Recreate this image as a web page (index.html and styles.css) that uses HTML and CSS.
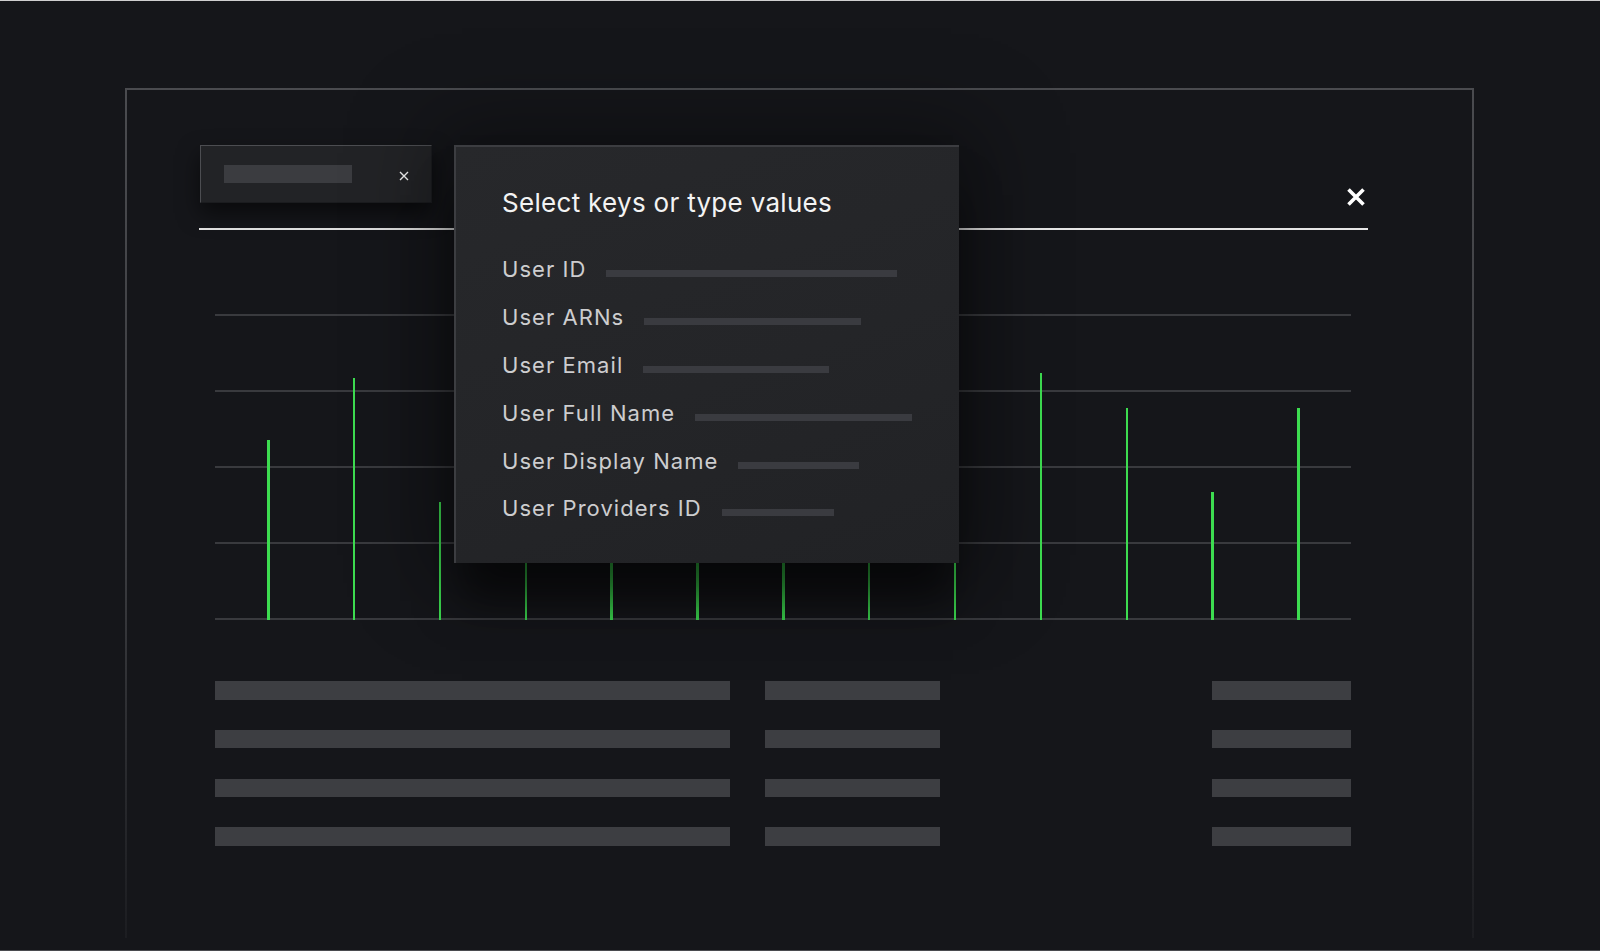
FILE: index.html
```html
<!DOCTYPE html>
<html lang="en">
<head>
<meta charset="utf-8">
<title>Select keys</title>
<link rel="stylesheet" href="styles.css">
</head>
<body>
<div class="frame">
  <div class="filterbar">
    <div class="chip">
      <div class="chip-fill"></div>
      <svg class="chip-x" width="10" height="10" viewBox="0 0 10 10"><path d="M1 1 L9 9 M9 1 L1 9" stroke="#f2f2f2" stroke-width="1.4" fill="none"/></svg>
    </div>
    <svg class="close-x" width="20" height="20" viewBox="0 0 20 20"><path d="M2.5 2.5 L17.5 17.5 M17.5 2.5 L2.5 17.5" stroke="#ffffff" stroke-width="3.6" fill="none"/></svg>
  </div>

  <div class="popup">
    <div class="popup-title">Select keys or type values</div>
    <ul class="keys">
      <li class="key"><span class="key-name">User ID</span><span class="key-bar" style="width:291px"></span></li>
      <li class="key"><span class="key-name">User ARNs</span><span class="key-bar" style="width:217px"></span></li>
      <li class="key"><span class="key-name">User Email</span><span class="key-bar" style="width:186px"></span></li>
      <li class="key"><span class="key-name">User Full Name</span><span class="key-bar" style="width:217px"></span></li>
      <li class="key"><span class="key-name">User Display Name</span><span class="key-bar" style="width:121px"></span></li>
      <li class="key"><span class="key-name">User Providers ID</span><span class="key-bar" style="width:112px"></span></li>
    </ul>
  </div>

  <div class="chart">
    <div class="bars">
      <div class="bar-col"><div class="bar" style="height:180px"></div></div>
      <div class="bar-col"><div class="bar" style="height:242px"></div></div>
      <div class="bar-col"><div class="bar" style="height:118px"></div></div>
      <div class="bar-col"><div class="bar" style="height:200px"></div></div>
      <div class="bar-col"><div class="bar" style="height:150px"></div></div>
      <div class="bar-col"><div class="bar" style="height:225px"></div></div>
      <div class="bar-col"><div class="bar" style="height:170px"></div></div>
      <div class="bar-col"><div class="bar" style="height:240px"></div></div>
      <div class="bar-col"><div class="bar" style="height:135px"></div></div>
      <div class="bar-col"><div class="bar" style="height:247px"></div></div>
      <div class="bar-col"><div class="bar" style="height:212px"></div></div>
      <div class="bar-col"><div class="bar" style="height:128px"></div></div>
      <div class="bar-col"><div class="bar" style="height:212px"></div></div>
    </div>
  </div>

  <div class="table">
    <div class="cell"></div><div class="cell"></div><div class="cell empty"></div><div class="cell"></div>
    <div class="cell"></div><div class="cell"></div><div class="cell empty"></div><div class="cell"></div>
    <div class="cell"></div><div class="cell"></div><div class="cell empty"></div><div class="cell"></div>
    <div class="cell"></div><div class="cell"></div><div class="cell empty"></div><div class="cell"></div>
  </div>
</div>
</body>
</html>
```

FILE: styles.css
```css
* { box-sizing: border-box; }

html, body {
  margin: 0;
  padding: 0;
}

body {
  width: 1600px;
  height: 951px;
  overflow: hidden;
  background: #15161a;
  border-top: 1px solid #cfcfd0;
  border-bottom: 1px solid #4a4b4f;
  font-family: Inter, "Liberation Sans", sans-serif;
}

.frame {
  position: relative;
  margin: 87px 0 0 125px;
  width: 1349px;
  height: 850px;
  padding: 55px 0 0 72px;
  border: 2px solid #46474b;
  border-bottom: none;
  border-image: linear-gradient(to bottom, #4a4b4f 0%, #3a3b3f 55%, #1c1d21 100%) 1;
}

.filterbar {
  width: 1169px;
  height: 85px;
  display: flex;
  justify-content: space-between;
  align-items: flex-start;
  border-bottom: 2px solid #e6e6e6;
}

.chip {
  width: 232px;
  height: 58px;
  margin-left: 1px;
  display: flex;
  align-items: center;
  justify-content: space-between;
  padding: 0 22px 0 23px;
  background: #222326;
  border-top: 1px solid #4c4d51;
  border-left: 1px solid #4c4d51;
  border-right: 1px solid #1b1c1f;
  border-bottom: 1px solid #1b1c1f;
  box-shadow: 0 10px 22px rgba(0, 0, 0, 0.55);
}

.chip-fill {
  width: 128px;
  height: 18px;
  background: #3b3c40;
}

.chip-x {
  display: block;
  margin-top: 3px;
}

.close-x {
  display: block;
  margin-top: 42px;
  margin-right: 2px;
}

.popup {
  position: absolute;
  left: 327px;
  top: 55px;
  width: 505px;
  height: 418px;
  z-index: 2;
  padding: 41px 0 0 46px;
  background: linear-gradient(160deg, #27282b 0%, #242528 55%, #212225 100%);
  border-top: 2px solid #3c3d41;
  border-left: 2px solid #3c3d41;
  box-shadow: 0 44px 40px -6px rgba(0, 0, 0, 0.55), 0 0 80px 20px rgba(0, 0, 0, 0.35);
}

.popup-title {
  font-size: 26px;
  line-height: 30px;
  color: #f3f3f3;
  letter-spacing: 0.3px;
}

.keys {
  list-style: none;
  margin: 28px 0 0;
  padding: 0;
}

.key {
  display: flex;
  align-items: baseline;
  height: 47.9px;
  line-height: 47.9px;
  font-size: 22px;
  color: #cdcdcf;
  letter-spacing: 1.05px;
}

.key-bar {
  display: inline-block;
  height: 7px;
  margin-left: 20px;
  background: #3a3b40;
}

.chart {
  width: 1136px;
  height: 307px;
  margin: 84px 0 0 16px;
  background: repeating-linear-gradient(to bottom, #393a3e 0, #393a3e 2px, transparent 2px, transparent 76.1px);
}

.bars {
  height: 306px;
  padding-left: 10.4px;
  display: grid;
  grid-template-columns: repeat(13, 85.85px);
  align-items: end;
}

.bar-col {
  display: flex;
  justify-content: center;
}

.bar {
  width: 2.4px;
  background: #3ddc50;
}

.table {
  width: 1136px;
  margin: 60px 0 0 16px;
  display: grid;
  grid-template-columns: 515px 175px 202px 139px;
  column-gap: 35px;
  row-gap: 30.3px;
}

.cell {
  height: 18.5px;
  background: #3d3e42;
}

.cell.empty { background: transparent; }
```
